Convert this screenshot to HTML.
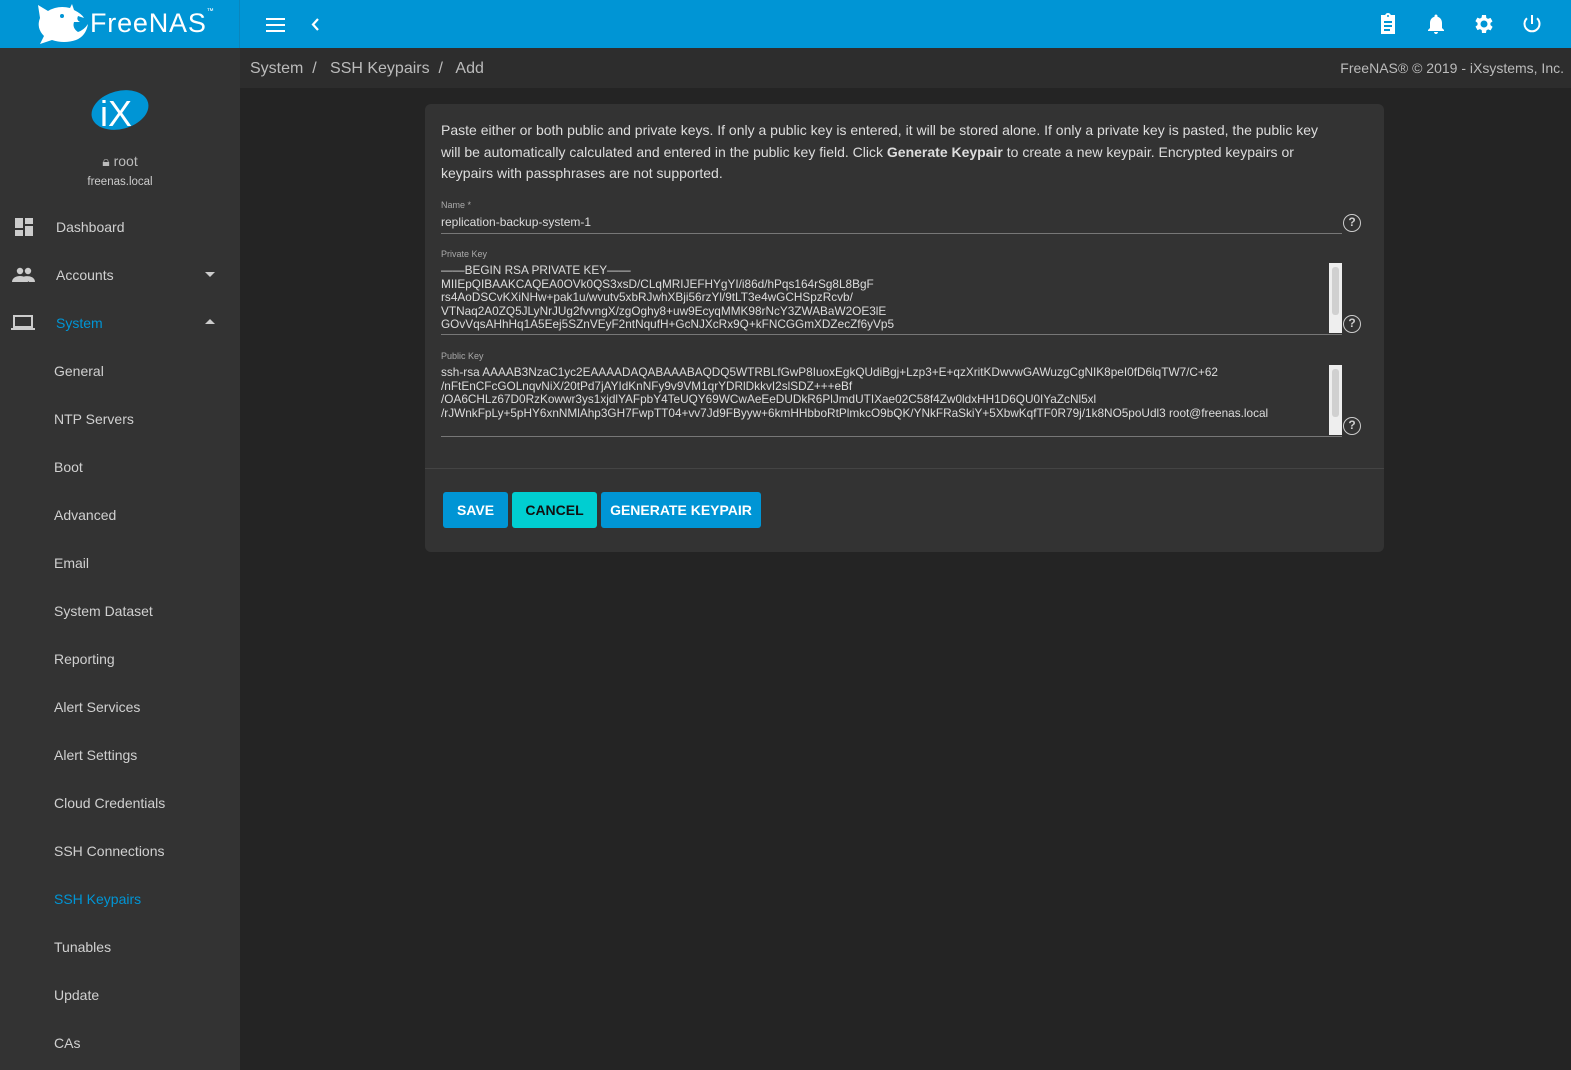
<!DOCTYPE html>
<html><head><meta charset="utf-8"><style>
*{box-sizing:border-box;margin:0;padding:0}
body{width:1571px;height:1070px;overflow:hidden;background:#242424;font-family:"Liberation Sans",sans-serif;color:#ddd;position:relative}
.top{position:absolute;left:0;top:0;width:1571px;height:48px;background:#0095d5}
.logo{position:absolute;left:0;top:0;width:240px;height:48px;border-right:1px solid #0a86bd}
.side{position:absolute;left:0;top:48px;width:240px;height:1022px;background:#333}
.crumb{position:absolute;left:240px;top:48px;width:1331px;height:40px;background:#2d2d2d;font-size:16px;color:#bbb}
.nav{position:absolute;left:0;width:240px;height:48px;font-size:14px;color:#d0d0d0;line-height:48px}
.card{position:absolute;left:425px;top:104px;width:959px;height:448px;background:#333;border-radius:6px}
.lbl{position:absolute;left:16px;font-size:9px;color:#aaa}
.ta{position:absolute;left:16px;font-size:11.8px;line-height:13.5px;color:#ddd;white-space:pre;overflow:hidden;width:885px}
.line{position:absolute;left:16px;width:901px;height:1px;background:#777}
.q{position:absolute;left:918px;width:18px;height:18px;border:1.5px solid #ccc;border-radius:50%;font-size:12px;font-weight:bold;text-align:center;line-height:15px;color:#ccc}
.sb{position:absolute;left:904px;width:13px;background:#eee}
.sb i{position:absolute;left:3px;top:4px;width:7px;bottom:18px;background:#d0d0d0;border-radius:3px}
.btn{position:absolute;top:388px;height:36px;border-radius:3px;font-size:14px;font-weight:bold;line-height:36px;text-align:center}
</style></head><body>
<div class="top">
 <div class="logo">
  <svg width="60" height="46" viewBox="0 0 60 46" style="position:absolute;left:32px;top:2px"><path d="M6 3 L16 9 Q26 3 38 6 L40 2 L42 8 Q50 12 52 16 L46 14 Q44 18 48 20 L42 20 Q40 26 46 30 Q52 28 56 22 Q54 34 44 38 Q32 42 20 38 L8 42 L12 34 Q4 26 8 16 Z" fill="#fff"/><circle cx="30" cy="14" r="2" fill="#0095d5"/></svg>
  <div style="position:absolute;left:90px;top:8px;font-size:27px;color:#fff;letter-spacing:0.8px">FreeNAS<span style="font-size:7px;vertical-align:top">™</span></div>
 </div>
 <svg width="20" height="16" style="position:absolute;left:266px;top:17px"><rect y="1" width="19" height="2" fill="#fff"/><rect y="7" width="19" height="2" fill="#fff"/><rect y="13" width="19" height="2" fill="#fff"/></svg>
 <svg width="10" height="14" style="position:absolute;left:311px;top:18px"><path d="M7 1 L2 6.5 L7 12" stroke="#fff" stroke-width="2.2" fill="none"/></svg>
 <svg width="24" height="24" viewBox="0 0 24 24" style="position:absolute;left:1376px;top:12px"><path d="M19 3h-4.2C14.4 1.8 13.3 1 12 1s-2.4.8-2.8 2H5v19h14zM12 3a1 1 0 110 2 1 1 0 010-2zM8 9h8v2H8zm0 4h8v2H8zm0 4h6v2H8z" fill="#fff"/></svg>
 <svg width="24" height="24" viewBox="0 0 24 24" style="position:absolute;left:1424px;top:12px"><path d="M12 22c1.1 0 2-.9 2-2h-4c0 1.1.9 2 2 2zm6-6v-5c0-3.1-1.6-5.6-4.5-6.3V4c0-.8-.7-1.5-1.5-1.5s-1.5.7-1.5 1.5v.7C7.6 5.4 6 7.9 6 11v5l-2 2v1h16v-1z" fill="#fff"/></svg>
 <svg width="24" height="24" viewBox="0 0 24 24" style="position:absolute;left:1472px;top:12px"><path d="M19.4 13c0-.3.1-.6.1-1s0-.7-.1-1l2.1-1.6-2-3.5-2.5 1c-.5-.4-1.1-.7-1.7-1L15 3h-4l-.4 2.6c-.6.3-1.2.6-1.7 1l-2.5-1-2 3.5L6.6 11c0 .3-.1.6-.1 1s0 .7.1 1l-2.1 1.6 2 3.5 2.5-1c.5.4 1.1.7 1.7 1L11 21h4l.4-2.6c.6-.3 1.2-.6 1.7-1l2.5 1 2-3.5zM13 15.5a3.5 3.5 0 110-7 3.5 3.5 0 010 7z" fill="#fff" transform="translate(-1 0)"/></svg>
 <svg width="24" height="24" viewBox="0 0 24 24" style="position:absolute;left:1520px;top:12px"><path d="M12 3v9M7 6.2A7.5 7.5 0 1017 6.2" stroke="#fff" stroke-width="2" fill="none"/></svg>
</div>
<div class="side">
 <svg width="60" height="44" style="position:absolute;left:90px;top:40px"><ellipse cx="30" cy="22" rx="29" ry="19" transform="rotate(-15 30 22)" fill="#0095d5"/><text x="10" y="38" font-size="36" fill="#fff" font-family="Liberation Sans">iX</text></svg>
 <div style="position:absolute;left:0;width:240px;top:105px;text-align:center;font-size:14px;color:#bbb">🔒︎ root</div>
 <div style="position:absolute;left:0;width:240px;top:128px;text-align:center;font-size:11.5px;color:#ccc">freenas.local</div>
 <div class="nav" style="top:155px"><svg width="20" height="20" style="position:absolute;left:14px;top:14px"><rect x="1" y="1" width="8" height="10" fill="#ccc"/><rect x="11" y="1" width="8" height="6" fill="#ccc"/><rect x="1" y="13" width="8" height="6" fill="#ccc"/><rect x="11" y="9" width="8" height="10" fill="#ccc"/></svg><span style="position:absolute;left:56px">Dashboard</span></div>
 <div class="nav" style="top:203px"><svg width="24" height="16" style="position:absolute;left:12px;top:16px"><circle cx="8" cy="4" r="3.2" fill="#ccc"/><circle cx="16" cy="4" r="3.2" fill="#ccc"/><path d="M0 15c0-4 4-6 8-6s8 2 8 6zM12 9.5c4-1 11 0 11 5.5h-6" fill="#ccc"/></svg><span style="position:absolute;left:56px">Accounts</span><svg width="10" height="6" style="position:absolute;left:205px;top:21px"><path d="M0 0h10L5 5z" fill="#ccc"/></svg></div>
 <div class="nav" style="top:251px;color:#0095d5"><svg width="26" height="18" style="position:absolute;left:11px;top:15px"><rect x="3" y="2" width="18" height="11" stroke="#ccc" stroke-width="2" fill="none"/><rect x="0" y="14" width="24" height="2" fill="#ccc"/></svg><span style="position:absolute;left:56px">System</span><svg width="10" height="6" style="position:absolute;left:205px;top:20px"><path d="M0 5h10L5 0z" fill="#ccc"/></svg></div>
 <div class="nav" style="top:299px"><span style="position:absolute;left:54px">General</span></div>
 <div class="nav" style="top:347px"><span style="position:absolute;left:54px">NTP Servers</span></div>
 <div class="nav" style="top:395px"><span style="position:absolute;left:54px">Boot</span></div>
 <div class="nav" style="top:443px"><span style="position:absolute;left:54px">Advanced</span></div>
 <div class="nav" style="top:491px"><span style="position:absolute;left:54px">Email</span></div>
 <div class="nav" style="top:539px"><span style="position:absolute;left:54px">System Dataset</span></div>
 <div class="nav" style="top:587px"><span style="position:absolute;left:54px">Reporting</span></div>
 <div class="nav" style="top:635px"><span style="position:absolute;left:54px">Alert Services</span></div>
 <div class="nav" style="top:683px"><span style="position:absolute;left:54px">Alert Settings</span></div>
 <div class="nav" style="top:731px"><span style="position:absolute;left:54px">Cloud Credentials</span></div>
 <div class="nav" style="top:779px"><span style="position:absolute;left:54px">SSH Connections</span></div>
 <div class="nav" style="top:827px;color:#0095d5"><span style="position:absolute;left:54px">SSH Keypairs</span></div>
 <div class="nav" style="top:875px"><span style="position:absolute;left:54px">Tunables</span></div>
 <div class="nav" style="top:923px"><span style="position:absolute;left:54px">Update</span></div>
 <div class="nav" style="top:971px"><span style="position:absolute;left:54px">CAs</span></div>
</div>
<div class="crumb">
 <span style="position:absolute;left:10px;top:12px">System &nbsp;/&nbsp;&nbsp; SSH Keypairs &nbsp;/&nbsp;&nbsp; Add</span>
 <span style="position:absolute;right:7px;top:12px;font-size:14px">FreeNAS® © 2019 - iXsystems, Inc.</span>
</div>
<div class="card">
 <div style="position:absolute;left:16px;top:16px;width:930px;font-size:14px;line-height:21.5px;color:#ddd;white-space:nowrap">Paste either or both public and private keys. If only a public key is entered, it will be stored alone. If only a private key is pasted, the public key<br>will be automatically calculated and entered in the public key field. Click <b>Generate Keypair</b> to create a new keypair. Encrypted keypairs or<br>keypairs with passphrases are not supported.</div>
 <div class="lbl" style="top:96px">Name *</div>
 <div style="position:absolute;left:16px;top:111px;font-size:12px;color:#ddd">replication-backup-system-1</div>
 <div class="line" style="top:129px"></div><div class="q" style="top:110px">?</div>
 <div class="lbl" style="top:145px">Private Key</div>
 <div class="ta" style="top:160px;height:67px">——BEGIN RSA PRIVATE KEY——
MIIEpQIBAAKCAQEA0OVk0QS3xsD/CLqMRIJEFHYgYI/i86d/hPqs164rSg8L8BgF
rs4AoDSCvKXiNHw+pak1u/wvutv5xbRJwhXBji56rzYl/9tLT3e4wGCHSpzRcvb/
VTNaq2A0ZQ5JLyNrJUg2fvvngX/zgOghy8+uw9EcyqMMK98rNcY3ZWABaW2OE3lE
GOvVqsAHhHq1A5Eej5SZnVEyF2ntNqufH+GcNJXcRx9Q+kFNCGGmXDZecZf6yVp5</div>
 <div class="sb" style="top:159px;height:70px"><i></i></div>
 <div class="line" style="top:230px"></div><div class="q" style="top:211px">?</div>
 <div class="lbl" style="top:247px">Public Key</div>
 <div class="ta" style="top:262px;height:62px">ssh-rsa AAAAB3NzaC1yc2EAAAADAQABAAABAQDQ5WTRBLfGwP8IuoxEgkQUdiBgj+Lzp3+E+qzXritKDwvwGAWuzgCgNIK8peI0fD6lqTW7/C+62
/nFtEnCFcGOLnqvNiX/20tPd7jAYIdKnNFy9v9VM1qrYDRlDkkvI2slSDZ+++eBf
/OA6CHLz67D0RzKowwr3ys1xjdlYAFpbY4TeUQY69WCwAeEeDUDkR6PlJmdUTIXae02C58f4Zw0ldxHH1D6QU0IYaZcNl5xl
/rJWnkFpLy+5pHY6xnNMlAhp3GH7FwpTT04+vv7Jd9FByyw+6kmHHbboRtPlmkcO9bQK/YNkFRaSkiY+5XbwKqfTF0R79j/1k8NO5poUdl3 root@freenas.local</div>
 <div class="sb" style="top:261px;height:70px"><i></i></div>
 <div class="line" style="top:332px"></div><div class="q" style="top:313px">?</div>
 <div style="position:absolute;left:0;top:364px;width:959px;height:1px;background:#444"></div>
 <div class="btn" style="left:18px;width:65px;background:#0095d5;color:#fff">SAVE</div>
 <div class="btn" style="left:87px;width:85px;background:#00ced1;color:#111">CANCEL</div>
 <div class="btn" style="left:176px;width:160px;background:#0095d5;color:#fff">GENERATE KEYPAIR</div>
</div>
</body></html>
